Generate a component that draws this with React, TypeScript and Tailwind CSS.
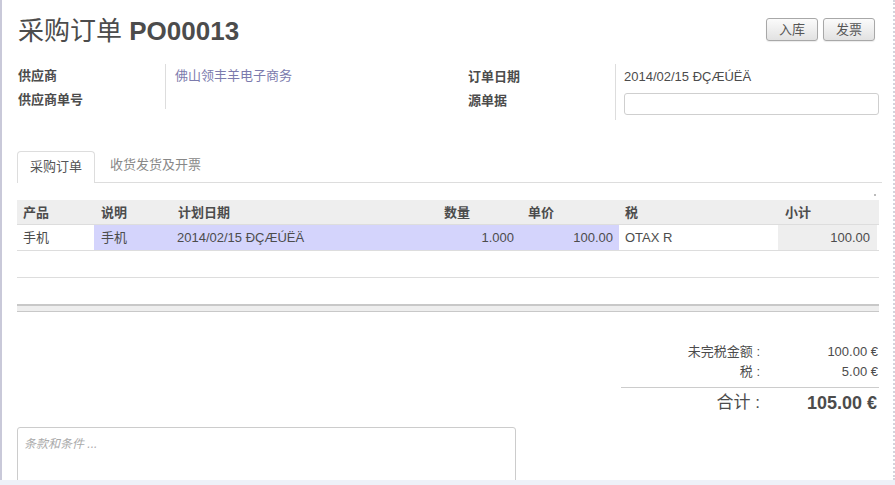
export default function App() {
  const font = { fontFamily: '"Liberation Sans", "Noto Sans CJK SC", sans-serif' };

  return (
    <div className="w-[895px] h-[485px] flex flex-col bg-white text-[#4c4c4c]" style={font}>
      <div className="h-[480px] overflow-hidden border-solid border-l-2 border-l-[#c9c9d9] border-r-2 border-r-[#d4d4dc] [border-right-style:dotted] pl-[15px] pr-[14px]">
        {/* header */}
        <div className="flex justify-between items-start mt-[16px] h-[30px]">
          <h1 className="text-[26px] leading-[30px] ml-[1px]">
            <span>采购订单</span> <span className="font-bold">PO00013</span>
          </h1>
          <div className="flex gap-[5px] mt-[2px] mr-[4px]">
            {["入库", "发票"].map((b) => (
              <button
                key={b}
                className="w-[52px] h-[23px] rounded-[3px] border border-[#a8a8a8] bg-gradient-to-b from-[#fbfbfb] to-[#e2e2e2] text-[13px] text-[#555] shadow-[0_1px_1px_rgba(0,0,0,0.08)]"
              >
                {b}
              </button>
            ))}
          </div>
        </div>

        {/* fields */}
        <div className="flex mt-[18px] text-[13px]">
          <div className="flex w-[451px]">
            <div className="w-[148px] font-bold">
              <div className="h-[24px] leading-[24px] pl-[1px]">供应商</div>
              <div className="h-[24px] leading-[24px] pl-[1px]">供应商单号</div>
            </div>
            <div className="border-l border-[#dddddd] h-[45px] pl-[9px]">
              <div className="h-[23px] leading-[23px] text-[#7c7bad]">佛山领丰羊电子商务</div>
            </div>
          </div>
          <div className="flex flex-1">
            <div className="w-[147px] font-bold">
              <div className="h-[26px] leading-[26px]">订单日期</div>
              <div className="h-[22px] leading-[22px]">源单据</div>
            </div>
            <div className="flex-1 border-l border-[#dddddd] h-[56px] pl-[8px]">
              <div className="h-[25px] leading-[25px]">2014/02/15 ĐÇÆÚËÄ</div>
              <div className="h-[22px] mt-[4px] border border-[#cfcfcf] rounded-[3px] bg-white" />
            </div>
          </div>
        </div>

        {/* tabs */}
        <div className="flex items-end h-[32px] mt-[31px] border-b border-[#dddddd] text-[13px] mr-[-3px]">
          <div className="w-[78px] h-[32px] leading-[30px] text-center border border-b-0 border-[#dddddd] rounded-t-[4px] bg-white -mb-px text-[#555]">
            采购订单
          </div>
          <div className="h-[32px] leading-[30px] ml-[15px] text-[#888]">收货发货及开票</div>
        </div>
        <div className="flex justify-end h-[17px]">
          <div className="w-[2px] h-[2px] bg-[#bbbbbb] mt-[11px] mr-[3px]" />
        </div>

        {/* table */}
        <div className="text-[13px]">
          <div className="flex h-[25px] leading-[25px] bg-[#eeeeee] font-bold border-b border-[#dddddd]">
            <div className="w-[77px] pl-[6px]">产品</div>
            <div className="w-[77px] pl-[7px]">说明</div>
            <div className="w-[267px] pl-[7px]">计划日期</div>
            <div className="w-[82px] pl-[6px]">数量</div>
            <div className="w-[99px] pl-[8px]">单价</div>
            <div className="w-[159px] pl-[6px]">税</div>
            <div className="w-[99px] pl-[7px]">小计</div>
          </div>
          <div className="flex h-[26px] leading-[26px] border-b border-[#dddddd]">
            <div className="w-[77px] pl-[6px] bg-white">手机</div>
            <div className="w-[77px] pl-[7px] bg-[#d4d4fc]">手机</div>
            <div className="w-[267px] pl-[6px] bg-[#d4d4fc]">2014/02/15 ĐÇÆÚËÄ</div>
            <div className="w-[82px] pr-[6px] text-right bg-[#d4d4fc]">1.000</div>
            <div className="w-[99px] pr-[6px] text-right bg-[#d4d4fc]">100.00</div>
            <div className="w-[159px] pl-[6px] bg-white">OTAX R</div>
            <div className="w-[99px] pr-[7px] text-right bg-[#eeeeee]">100.00</div>
          </div>
          <div className="h-[27px] border-b border-[#dddddd]" />
          <div className="h-[8px] mt-[26px] bg-[#eeeeee] border-t-2 border-b border-[#c8c8c8]" />
        </div>

        {/* totals */}
        <div className="flex justify-end mt-[30px] text-[13px]">
          <div className="w-[258px]">
            <div className="flex h-[20px] leading-[20px]">
              <div className="flex-1 text-right pr-[2px]">未完税金额 :</div>
              <div className="w-[117px] text-right pr-[1px]">100.00 €</div>
            </div>
            <div className="flex h-[20px] leading-[20px]">
              <div className="flex-1 text-right pr-[2px]">税 :</div>
              <div className="w-[117px] text-right pr-[1px]">5.00 €</div>
            </div>
            <div className="border-t border-[#cccccc] mt-[5px] flex h-[30px] leading-[30px] items-center">
              <div className="flex-1 text-right pr-[2px] text-[17px]">合计 :</div>
              <div className="w-[117px] text-right pr-[2px] text-[18px] font-bold">105.00 €</div>
            </div>
          </div>
        </div>

        {/* notes */}
        <div className="mt-[10px] w-[499px] h-[80px] border border-[#cccccc] rounded-[3px] px-[6px] pt-[3px]">
          <span className="italic text-[12px] text-[#aaaaaa]">条款和条件 ...</span>
        </div>
      </div>
      <div className="h-[5px] bg-[#eef1f8]" />
    </div>
  );
}
